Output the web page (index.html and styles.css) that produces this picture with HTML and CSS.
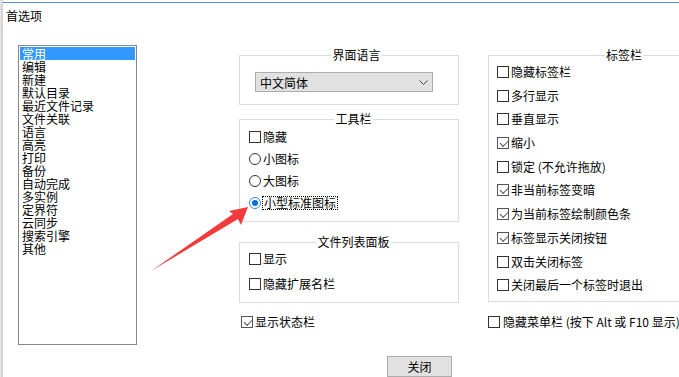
FILE: index.html
```html
<!DOCTYPE html>
<html lang="zh-CN">
<head>
<meta charset="utf-8">
<title>首选项</title>
<link rel="stylesheet" href="styles.css">
</head>
<body>
<div class="screen">
  <div class="edge"></div>
  <div class="dialog">
    <div class="title">首选项</div>
    <div class="content">
      <ul class="list">
        <li class="sel">常用</li>
        <li>编辑</li>
        <li>新建</li>
        <li>默认目录</li>
        <li>最近文件记录</li>
        <li>文件关联</li>
        <li>语言</li>
        <li>高亮</li>
        <li>打印</li>
        <li>备份</li>
        <li>自动完成</li>
        <li>多实例</li>
        <li>定界符</li>
        <li>云同步</li>
        <li>搜索引擎</li>
        <li>其他</li>
      </ul>

      <div class="col-mid">
        <fieldset class="group g-lang">
          <legend>界面语言</legend>
          <div class="select">
            <span>中文简体</span>
            <svg class="chev" width="9" height="5" viewBox="0 0 9 5"><path d="M0.5 0.5 L4.5 4.5 L8.5 0.5" fill="none" stroke="#444" stroke-width="1"/></svg>
          </div>
        </fieldset>

        <fieldset class="group g-tool">
          <legend>工具栏</legend>
          <div class="opt"><span class="box"></span><span>隐藏</span></div>
          <div class="opt"><span class="radio"></span><span>小图标</span></div>
          <div class="opt"><span class="radio"></span><span>大图标</span></div>
          <div class="opt"><span class="radio on"></span><span class="focus">小型标准图标</span></div>
        </fieldset>

        <fieldset class="group g-file">
          <legend>文件列表面板</legend>
          <div class="opt short"><span class="box"></span><span>显示</span></div>
          <div class="opt short"><span class="box"></span><span>隐藏扩展名栏</span></div>
        </fieldset>

        <div class="opt single status"><span class="box on"></span><span>显示状态栏</span></div>

        <button class="btn">关闭</button>
      </div>

      <div class="col-right">
        <fieldset class="group g-tab">
          <legend>标签栏</legend>
          <div class="opt"><span class="box"></span><span>隐藏标签栏</span></div>
          <div class="opt"><span class="box"></span><span>多行显示</span></div>
          <div class="opt"><span class="box"></span><span>垂直显示</span></div>
          <div class="opt"><span class="box on"></span><span>缩小</span></div>
          <div class="opt"><span class="box"></span><span>锁定 (不允许拖放)</span></div>
          <div class="opt"><span class="box on"></span><span>非当前标签变暗</span></div>
          <div class="opt"><span class="box on"></span><span>为当前标签绘制颜色条</span></div>
          <div class="opt"><span class="box on"></span><span>标签显示关闭按钮</span></div>
          <div class="opt"><span class="box"></span><span>双击关闭标签</span></div>
          <div class="opt"><span class="box"></span><span>关闭最后一个标签时退出</span></div>
        </fieldset>
        <div class="opt single menu"><span class="box"></span><span>隐藏菜单栏 (按下 Alt 或 F10 显示)</span></div>
      </div>
    </div>
  </div>

  <svg class="arrow" width="679" height="377" viewBox="0 0 679 377">
    <path d="M151 271 L233 214 L229 211 L248 207 L241 225 L238 219 Z" fill="#f33b3b"/>
  </svg>
</div>
</body>
</html>
```

FILE: styles.css
```css
* { box-sizing: border-box; }

html, body {
  margin: 0;
  padding: 0;
  background: #ffffff;
}

body {
  width: 679px;
  height: 377px;
  overflow: hidden;
  font-family: "Noto Sans CJK SC", "Noto Sans", sans-serif;
  font-size: 12px;
  color: #000;
}

.screen {
  position: relative;
  display: flex;
  width: 679px;
  height: 377px;
  overflow: hidden;
}

.edge {
  flex: none;
  width: 3px;
  height: 100%;
  background: linear-gradient(to right, #e4e4e4, #d0d0d0);
}

.dialog {
  flex: none;
  width: 760px;
  margin-top: 2px;
  border-top: 1px solid #5a8ec8;
  background: #fff;
}

.title {
  height: 26px;
  line-height: 26px;
  padding-left: 3px;
  font-size: 12px;
}

.content {
  display: flex;
  align-items: flex-start;
  padding-top: 16px;
  padding-left: 15px;
}

.list {
  flex: none;
  list-style: none;
  margin: 0;
  width: 119px;
  height: 300px;
  border: 1px solid #828790;
  padding: 1px;
  font-size: 12px;
  line-height: 13px;
}

.list li {
  height: 13px;
  padding-left: 2px;
  white-space: nowrap;
}

.list li.sel {
  background: #3399ff;
  color: #fff;
}

.col-mid {
  flex: none;
  width: 220px;
  margin-left: 102px;
  display: flex;
  flex-direction: column;
}

.col-right {
  flex: none;
  width: 264px;
  margin-left: 29px;
  display: flex;
  flex-direction: column;
}

.group {
  margin: 0;
  min-width: 0;
  border: 1px solid #dcdcdc;
}

.group legend {
  margin-left: auto;
  margin-right: auto;
  padding: 0 1px;
  font-size: 12px;
  line-height: 12px;
}

.g-lang {
  margin-top: 4px;
  padding: 11px 0 12px 15px;
}

.g-tool {
  margin-top: 8px;
  padding: 1px 0 7px 9px;
}

.g-file {
  margin-top: 14px;
  padding: 1px 0 8px 9px;
  display: flex;
  flex-direction: column;
  gap: 5px;
}

.g-tab {
  margin-top: 4px;
  padding: 0 0 5px 8px;
  display: flex;
  flex-direction: column;
  gap: 1.7px;
}

.select {
  display: flex;
  align-items: center;
  justify-content: space-between;
  width: 178px;
  height: 20px;
  background: #e1e1e1;
  border: 1px solid #adadad;
  padding: 0 4px 0 4px;
  font-size: 12px;
}

.chev { display: block; }

.opt {
  display: flex;
  align-items: center;
  gap: 2px;
  height: 22px;
  white-space: nowrap;
  font-size: 12px;
  line-height: 12px;
}

.opt.short { height: 20px; }

.opt.single { height: 20px; }

.status {
  margin-top: 9px;
  margin-left: 2px;
}

.menu {
  margin-top: 10px;
  gap: 3px;
}

.box {
  flex: none;
  position: relative;
  width: 12px;
  height: 12px;
  border: 1px solid #333;
  background: #fff;
}

.box.on { border-color: #555; }

.box.on::after {
  content: "";
  position: absolute;
  left: 2px;
  top: 2px;
  width: 7px;
  height: 3.5px;
  border-left: 1.2px solid #555;
  border-bottom: 1.2px solid #555;
  transform: rotate(-45deg);
}

.radio {
  flex: none;
  position: relative;
  width: 12px;
  height: 12px;
  border: 1px solid #333;
  border-radius: 50%;
  background: #fff;
}

.radio.on { border-color: #3a8be0; }

.radio.on::after {
  content: "";
  position: absolute;
  left: 2px;
  top: 2px;
  width: 6px;
  height: 6px;
  border-radius: 50%;
  background: #0a6fd6;
}

.focus {
  border: 1px dotted #000;
  padding: 0 1px;
  line-height: 12px;
  margin-left: -1px;
}

.btn {
  align-self: flex-end;
  margin-top: 24px;
  margin-right: 7px;
  width: 65px;
  height: 21px;
  padding: 0;
  background: #e1e1e1;
  border: 1px solid #adadad;
  border-radius: 0;
  font-family: "Noto Sans CJK SC", "Noto Sans", sans-serif;
  font-size: 12px;
  color: #000;
}

.arrow {
  position: absolute;
  left: 0;
  top: 0;
  pointer-events: none;
}
```
